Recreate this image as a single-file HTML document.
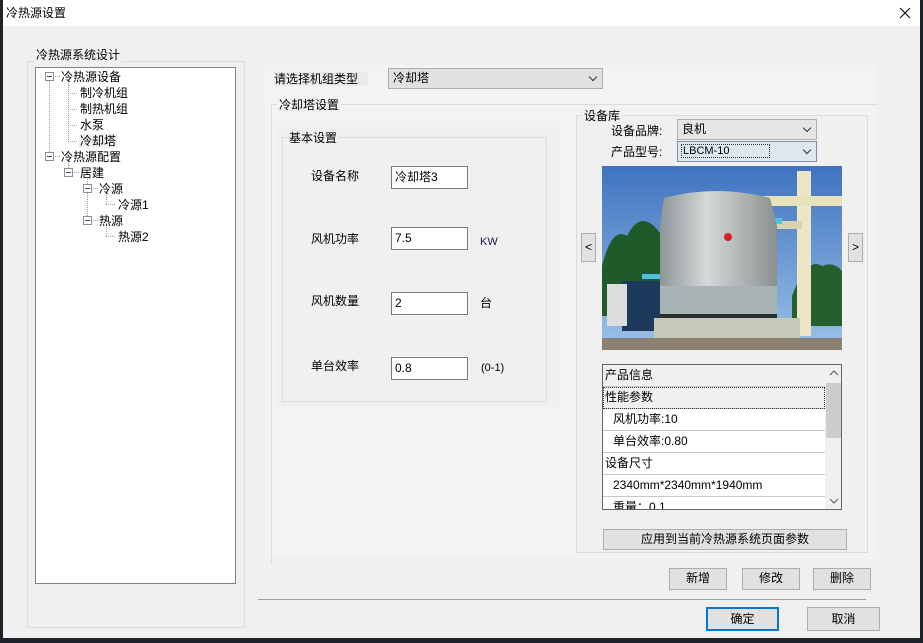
<!DOCTYPE html><html><head><meta charset="utf-8"><style>
*{box-sizing:border-box;margin:0;padding:0}
body{width:923px;height:643px;background:#1e2329;position:relative;overflow:hidden;font-family:"Liberation Sans","Noto Sans CJK SC",sans-serif;font-size:12px;color:#000}
.a{position:absolute}
.t{position:absolute;white-space:nowrap;line-height:14px}
.grp{position:absolute;border:1px solid #dcdcdc}
.lbl{position:absolute;background:#f0f0f0;padding:0 2px;line-height:14px;white-space:nowrap}
.inp{position:absolute;background:#fff;border:1px solid #7a7a7a;padding:3px 3px;line-height:14px}
.btn{position:absolute;background:#e1e1e1;border:1px solid #adadad;text-align:center;line-height:19px}
.cmb{position:absolute;background:#e5e5e5;border:1px solid #adadad;padding:2px 4px;line-height:15px}
.cmb:after{content:"";position:absolute;right:6px;top:5px;width:5px;height:5px;border-right:1px solid #333;border-bottom:1px solid #333;transform:rotate(45deg)}
.row{position:absolute;left:0;width:222px;height:22px;border-bottom:1px solid #c8c8c8;line-height:21px;background:#fff}
</style></head><body>
<div class="a" style="left:3px;top:0;width:917px;height:638px;background:#f0f0f0"></div>
<div class="a" style="left:3px;top:0;width:917px;height:26px;background:#fff"></div>
<div class="t" style="left:6px;top:6px;font-size:12px">冷热源设置</div>
<svg class="a" style="left:899px;top:7px" width="12" height="12"><path d="M1 1L11 11M11 1L1 11" stroke="#000" stroke-width="1"/></svg>

<div class="grp" style="left:27px;top:61px;width:218px;height:567px"></div>
<div class="lbl" style="left:34px;top:48px">冷热源系统设计</div>
<div class="a" style="left:35px;top:67px;width:201px;height:517px;background:#fff;border:1px solid #828282"></div>
<svg class="a" style="left:0;top:0" width="240" height="260">
<g stroke="#a0a0a0" stroke-dasharray="1 1" fill="none">
<path d="M49.5 81V152M53 76.5H60M53 156.5H60M68.5 81V141M68 93.5H78M68 109.5H78M68 125.5H78M68 141.5H78M68.5 161V168M72 172.5H79M87.5 177V184M87.5 193V216M91 188.5H98M91 220.5H98M106.5 193V204M106 204.5H116M106.5 225V236M106 236.5H116"/>
</g>
<g fill="#fff" stroke="#8e8e8e"><rect x="45.5" y="72.5" width="8" height="8"/><rect x="45.5" y="152.5" width="8" height="8"/><rect x="64.5" y="168.5" width="8" height="8"/><rect x="83.5" y="184.5" width="8" height="8"/><rect x="83.5" y="216.5" width="8" height="8"/></g>
<g stroke="#2f4a8c"><path d="M47 76.5H52M47 156.5H52M66 172.5H71M85 188.5H90M85 220.5H90"/></g>
</svg>
<div class="t" style="left:61px;top:70px">冷热源设备</div>
<div class="t" style="left:80px;top:86px">制冷机组</div>
<div class="t" style="left:80px;top:102px">制热机组</div>
<div class="t" style="left:80px;top:118px">水泵</div>
<div class="t" style="left:79px;top:134px;background:#f0f0f0;padding:0 1px">冷却塔</div>
<div class="t" style="left:61px;top:150px">冷热源配置</div>
<div class="t" style="left:80px;top:166px">居建</div>
<div class="t" style="left:99px;top:182px">冷源</div>
<div class="t" style="left:118px;top:198px">冷源1</div>
<div class="t" style="left:99px;top:214px">热源</div>
<div class="t" style="left:118px;top:230px">热源2</div>

<div class="a" style="left:264px;top:65px;width:614px;height:493px;background:#f3f3f3"></div>
<div class="t" style="left:274px;top:72px;background:#eaeaea;padding:0 10px 0 0">请选择机组类型</div>
<div class="cmb" style="left:388px;top:68px;width:215px;height:21px;background:#e1e1e1">冷却塔</div>
<div class="grp" style="left:271px;top:104px;width:607px;height:460px;border-right:none;border-bottom:none"></div>
<div class="lbl" style="left:277px;top:98px;background:#f0f0f0">冷却塔设置</div>
<div class="a" style="left:277px;top:127px;width:283px;height:280px;background:#f0f0f0"></div>
<div class="grp" style="left:282px;top:137px;width:265px;height:265px"></div>
<div class="lbl" style="left:287px;top:131px">基本设置</div>
<div class="t" style="left:311px;top:169px">设备名称</div>
<div class="inp" style="left:391px;top:166px;width:77px;height:23px">冷却塔3</div>
<div class="t" style="left:311px;top:232px">风机功率</div>
<div class="inp" style="left:391px;top:227px;width:77px;height:23px">7.5</div>
<div class="t" style="left:480px;top:235px;color:#1a1a60;font-size:11px">KW</div>
<div class="t" style="left:311px;top:294px">风机数量</div>
<div class="inp" style="left:391px;top:292px;width:77px;height:23px">2</div>
<div class="t" style="left:480px;top:296px">台</div>
<div class="t" style="left:311px;top:359px">单台效率</div>
<div class="inp" style="left:391px;top:357px;width:77px;height:23px">0.8</div>
<div class="t" style="left:481px;top:361px;font-size:11px">(0-1)</div>

<div class="a" style="left:576px;top:115px;width:292px;height:438px;background:#f0f0f0;border:1px solid #dcdcdc"></div>
<div class="lbl" style="left:582px;top:109px">设备库</div>
<div class="t" style="left:611px;top:124px">设备品牌:</div>
<div class="cmb" style="left:677px;top:119px;width:140px;height:21px">良机</div>
<div class="t" style="left:611px;top:145px">产品型号:</div>
<div class="cmb" style="left:677px;top:141px;width:140px;height:21px;background:#dce7f0;border-color:#7a8fa8;font-size:11px"><span style="outline:1px dotted #333;padding:0 40px 0 1px">LBCM-10</span></div>
<svg class="a" style="left:602px;top:166px" width="240" height="184">
<defs><linearGradient id="sky" x1="0" y1="0" x2="0" y2="1"><stop offset="0" stop-color="#3f73c0"/><stop offset="1" stop-color="#9cc2e8"/></linearGradient><linearGradient id="tw" x1="0" y1="0" x2="1" y2="0"><stop offset="0" stop-color="#8e9698"/><stop offset=".4" stop-color="#d4d8d8"/><stop offset="1" stop-color="#8a9090"/></linearGradient></defs>
<rect width="240" height="184" fill="url(#sky)"/>
<path d="M0 100Q10 60 25 70Q40 40 60 70Q70 80 80 90V150H0Z" fill="#1f5a2a"/>
<path d="M190 130Q205 90 220 100Q232 95 240 105V160H190Z" fill="#265e2e"/>
<rect x="195" y="5" width="14" height="165" fill="#ece6c4"/><rect x="160" y="30" width="80" height="10" fill="#e8e2bc"/><rect x="130" y="55" width="70" height="8" fill="#d8d2ae"/>
<rect x="60" y="52" width="120" height="6" fill="#50c0e0"/><rect x="40" y="108" width="30" height="5" fill="#50c0e0"/>
<rect x="20" y="115" width="50" height="50" fill="#1d3a5c"/><rect x="5" y="118" width="20" height="42" fill="#ddd"/>
<path d="M62 32Q115 18 168 32L175 60V125H58V60Z" fill="url(#tw)"/>
<rect x="58" y="120" width="117" height="30" fill="#a8b4b4"/>
<rect x="58" y="148" width="117" height="6" fill="#2a3030"/>
<rect x="52" y="152" width="146" height="20" fill="#c6c8b8"/>
<rect x="0" y="172" width="240" height="12" fill="#8a8270"/>
<circle cx="126" cy="71" r="4" fill="#d82020"/>
</svg>
<div class="btn" style="left:581px;top:233px;width:15px;height:29px;line-height:27px">&lt;</div>
<div class="btn" style="left:848px;top:233px;width:15px;height:29px;line-height:27px">&gt;</div>

<div class="a" style="left:602px;top:364px;width:240px;height:146px;border:1px solid #646464;background:#fff;overflow:hidden">
<div class="row" style="top:0;background:#f0f0f0;padding-left:2px">产品信息</div>
<div class="row" style="top:22px;background:#f0f0f0;padding-left:2px;outline:1px dotted #333;outline-offset:-1px">性能参数</div>
<div class="row" style="top:44px;padding-left:10px">风机功率:10</div>
<div class="row" style="top:66px;padding-left:10px">单台效率:0.80</div>
<div class="row" style="top:88px;padding-left:2px">设备尺寸</div>
<div class="row" style="top:110px;padding-left:10px">2340mm*2340mm*1940mm</div>
<div class="row" style="top:132px;padding-left:10px">重量：0.1</div>
<div class="a" style="left:222px;top:0;width:17px;height:144px;background:#f0f0f0"></div>
<div class="a" style="left:223px;top:18px;width:15px;height:55px;background:#cdcdcd"></div>
<svg class="a" style="left:226px;top:5px" width="10" height="6"><path d="M1 5L5 1L9 5" stroke="#555" fill="none"/></svg>
<svg class="a" style="left:226px;top:133px" width="10" height="6"><path d="M1 1L5 5L9 1" stroke="#555" fill="none"/></svg>
</div>
<div class="btn" style="left:603px;top:529px;width:244px;height:21px">应用到当前冷热源系统页面参数</div>

<div class="btn" style="left:669px;top:568px;width:58px;height:22px">新增</div>
<div class="btn" style="left:742px;top:568px;width:58px;height:22px">修改</div>
<div class="btn" style="left:813px;top:568px;width:58px;height:22px">删除</div>
<div class="a" style="left:258px;top:599px;width:608px;height:1px;background:#a0a0a0"></div>
<div class="btn" style="left:706px;top:607px;width:73px;height:24px;border:2px solid #0078d7;line-height:20px">确定</div>
<div class="btn" style="left:807px;top:607px;width:73px;height:24px;line-height:22px">取消</div>
</body></html>
